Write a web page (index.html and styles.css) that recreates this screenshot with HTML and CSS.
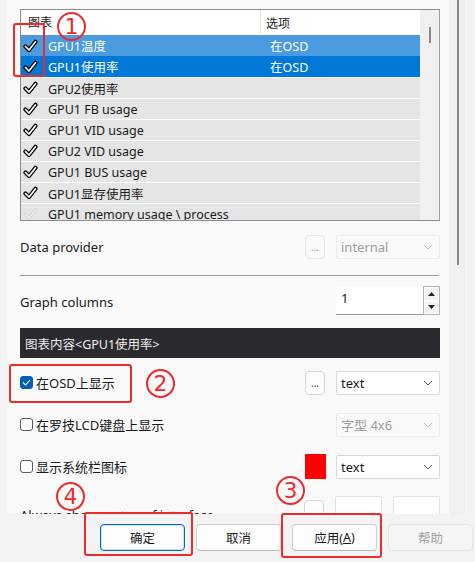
FILE: index.html
```html
<!DOCTYPE html>
<html lang="zh-CN">
<head>
  <meta charset="UTF-8">
  <title>监控图表设置</title>
  <link rel="stylesheet" href="styles.css">
</head>
<body>
  <div class="window">
    <div class="main">
      <div class="panel">
        <!-- graph list -->
        <div class="list">
          <div class="list-body">
            <div class="list-head">
              <span class="col-name">图表</span>
              <span class="col-opt">选项</span>
            </div>
            <div class="row hover"><span class="chk"><svg width="15" height="14" viewBox="0 0 15 14"><path d="M2.5 7.5 L6 11 L12.5 2.8" fill="none" stroke="#000" stroke-width="4.2" stroke-linecap="round" stroke-linejoin="round"/><path d="M2.5 7.5 L6 11 L12.5 2.8" fill="none" stroke="#fff" stroke-width="1.7" stroke-linecap="round" stroke-linejoin="round"/></svg></span><span class="col-name">GPU1温度</span><span class="col-opt">在OSD</span></div>
            <div class="row selected"><span class="chk"><svg width="15" height="14" viewBox="0 0 15 14"><path d="M2.5 7.5 L6 11 L12.5 2.8" fill="none" stroke="#000" stroke-width="4.2" stroke-linecap="round" stroke-linejoin="round"/><path d="M2.5 7.5 L6 11 L12.5 2.8" fill="none" stroke="#fff" stroke-width="1.7" stroke-linecap="round" stroke-linejoin="round"/></svg></span><span class="col-name">GPU1使用率</span><span class="col-opt">在OSD</span></div>
            <div class="row"><span class="chk"><svg width="15" height="14" viewBox="0 0 15 14"><path d="M2.5 7.5 L6 11 L12.5 2.8" fill="none" stroke="#000" stroke-width="4.2" stroke-linecap="round" stroke-linejoin="round"/><path d="M2.5 7.5 L6 11 L12.5 2.8" fill="none" stroke="#fff" stroke-width="1.7" stroke-linecap="round" stroke-linejoin="round"/></svg></span><span class="col-name">GPU2使用率</span></div>
            <div class="row"><span class="chk"><svg width="15" height="14" viewBox="0 0 15 14"><path d="M2.5 7.5 L6 11 L12.5 2.8" fill="none" stroke="#000" stroke-width="4.2" stroke-linecap="round" stroke-linejoin="round"/><path d="M2.5 7.5 L6 11 L12.5 2.8" fill="none" stroke="#fff" stroke-width="1.7" stroke-linecap="round" stroke-linejoin="round"/></svg></span><span class="col-name">GPU1 FB usage</span></div>
            <div class="row"><span class="chk"><svg width="15" height="14" viewBox="0 0 15 14"><path d="M2.5 7.5 L6 11 L12.5 2.8" fill="none" stroke="#000" stroke-width="4.2" stroke-linecap="round" stroke-linejoin="round"/><path d="M2.5 7.5 L6 11 L12.5 2.8" fill="none" stroke="#fff" stroke-width="1.7" stroke-linecap="round" stroke-linejoin="round"/></svg></span><span class="col-name">GPU1 VID usage</span></div>
            <div class="row"><span class="chk"><svg width="15" height="14" viewBox="0 0 15 14"><path d="M2.5 7.5 L6 11 L12.5 2.8" fill="none" stroke="#000" stroke-width="4.2" stroke-linecap="round" stroke-linejoin="round"/><path d="M2.5 7.5 L6 11 L12.5 2.8" fill="none" stroke="#fff" stroke-width="1.7" stroke-linecap="round" stroke-linejoin="round"/></svg></span><span class="col-name">GPU2 VID usage</span></div>
            <div class="row"><span class="chk"><svg width="15" height="14" viewBox="0 0 15 14"><path d="M2.5 7.5 L6 11 L12.5 2.8" fill="none" stroke="#000" stroke-width="4.2" stroke-linecap="round" stroke-linejoin="round"/><path d="M2.5 7.5 L6 11 L12.5 2.8" fill="none" stroke="#fff" stroke-width="1.7" stroke-linecap="round" stroke-linejoin="round"/></svg></span><span class="col-name">GPU1 BUS usage</span></div>
            <div class="row"><span class="chk"><svg width="15" height="14" viewBox="0 0 15 14"><path d="M2.5 7.5 L6 11 L12.5 2.8" fill="none" stroke="#000" stroke-width="4.2" stroke-linecap="round" stroke-linejoin="round"/><path d="M2.5 7.5 L6 11 L12.5 2.8" fill="none" stroke="#fff" stroke-width="1.7" stroke-linecap="round" stroke-linejoin="round"/></svg></span><span class="col-name">GPU1显存使用率</span></div>
            <div class="row"><span class="chk"><svg width="15" height="14" viewBox="0 0 15 14"><path d="M2.5 7.5 L6 11 L12.5 2.8" fill="none" stroke="#d4d4d4" stroke-width="3" stroke-linecap="round" stroke-linejoin="round"/><path d="M2.5 7.5 L6 11 L12.5 2.8" fill="none" stroke="#f2f2f2" stroke-width="1.2" stroke-linecap="round" stroke-linejoin="round"/></svg></span><span class="col-name">GPU1 memory usage \ process</span></div>
          </div>
          <div class="list-scroll"><div class="list-thumb"></div></div>
        </div>

        <div class="field first">
          <span class="label">Data provider</span>
          <span class="dots disabled">...</span>
          <span class="select disabled">internal<svg class="chev" width="10" height="6" viewBox="0 0 10 6"><path d="M1 1 L5 5 L9 1" fill="none" stroke="currentColor" stroke-width="1"/></svg></span>
        </div>

        <div class="rule"></div>

        <div class="field cols">
          <span class="label">Graph columns</span>
          <span class="spin">
            <span class="spin-value">1</span>
            <span class="spin-btns">
              <span class="spin-btn"><svg width="7" height="4" viewBox="0 0 7 4"><path d="M0 4 L3.5 0 L7 4 Z" fill="#222"/></svg></span>
              <span class="spin-btn"><svg width="7" height="4" viewBox="0 0 7 4"><path d="M0 0 L3.5 4 L7 0 Z" fill="#222"/></svg></span>
            </span>
          </span>
        </div>

        <div class="band">图表内容&lt;GPU1使用率&gt;</div>

        <div class="field opt">
          <span class="label"><span class="box checked"><svg width="9" height="7" viewBox="0 0 9 7"><path d="M1 3.5 L3.5 6 L8 1" fill="none" stroke="#fff" stroke-width="1.1"/></svg></span>在OSD上显示</span>
          <span class="dots">...</span>
          <span class="select">text<svg class="chev" width="10" height="6" viewBox="0 0 10 6"><path d="M1 1 L5 5 L9 1" fill="none" stroke="currentColor" stroke-width="1"/></svg></span>
        </div>

        <div class="field opt">
          <span class="label"><span class="box"></span>在罗技LCD键盘上显示</span>
          <span class="select disabled">字型 4x6<svg class="chev" width="10" height="6" viewBox="0 0 10 6"><path d="M1 1 L5 5 L9 1" fill="none" stroke="currentColor" stroke-width="1"/></svg></span>
        </div>

        <div class="field opt">
          <span class="label"><span class="box"></span>显示系统栏图标</span>
          <span class="swatch"></span>
          <span class="select">text<svg class="chev" width="10" height="6" viewBox="0 0 10 6"><path d="M1 1 L5 5 L9 1" fill="none" stroke="currentColor" stroke-width="1"/></svg></span>
        </div>

        <div class="field opt last">
          <span class="label">Always show on top of interface</span>
          <span class="dots"></span>
          <span class="mini"></span>
          <span class="mini"></span>
        </div>
      </div>
      <div class="vscroll"><div class="vthumb"></div></div>
    </div>

    <div class="buttons">
      <span class="btn default">确定</span>
      <span class="btn">取消</span>
      <span class="btn">应用(<u>A</u>)</span>
      <span class="btn disabled">帮助</span>
    </div>

    <!-- annotations -->
    <div class="mark box-1"></div>
    <div class="mark box-2"></div>
    <div class="mark box-3"></div>
    <div class="mark box-4"></div>
    <span class="num n1">1</span>
    <span class="num n2">2</span>
    <span class="num n3">3</span>
    <span class="num n4">4</span>
  </div>
</body>
</html>
```

FILE: styles.css
```css
* {
  box-sizing: border-box;
}
body {
  margin: 0;
  width: 475px;
  height: 562px;
  overflow: hidden;
  background-color: #f3f3f3;
  font-family: "Noto Sans", "Noto Sans CJK SC", sans-serif;
  font-size: 12px;
  color: #1a1a1a;
}
.window {
  position: relative;
  height: 562px;
  display: flex;
  flex-direction: column;
}
.main {
  display: flex;
  height: 514px;
  padding-left: 7px;
}
.panel {
  width: 442px;
  background-color: #f9f9f9;
  padding: 9px 9px 0 13px;
  overflow: hidden;
}
.vscroll {
  width: 18px;
  background-color: #f0f0f0;
  border-right: 1px solid #fafafa;
  display: flex;
  justify-content: center;
}
.vthumb {
  width: 2px;
  height: 265px;
  background-color: #8a8a8a;
}

/* list */
.list {
  display: flex;
  height: 212px;
  border: 1px solid #8c8c8c;
  border-right-color: #a0a0a0;
  background-color: #fff;
  overflow: hidden;
}
.list-body {
  flex: 1;
}
.list-scroll {
  width: 19px;
  background-color: #f0f0f0;
  display: flex;
  justify-content: center;
  padding-top: 17px;
}
.list-thumb {
  width: 2px;
  height: 16px;
  background-color: #8a8a8a;
}
.list-head {
  display: flex;
  height: 25px;
  align-items: center;
  background-color: #fff;
  font-size: 12px;
}
.list-head .col-name {
  width: 240px;
  padding-left: 7px;
  border-right: 1px solid #e5e5e5;
  height: 25px;
  line-height: 25px;
}
.list-head .col-opt {
  padding-left: 5px;
}
.row {
  display: flex;
  align-items: center;
  height: 21px;
  border-top: 1px solid #fff;
  background-color: #e5e5e5;
  font-size: 12.5px;
}
.row.hover {
  background-color: #4a9be0;
  color: #fff;
  border-top: none;
}
.row.selected {
  background-color: #0078d7;
  color: #fff;
  border-top: none;
}
.chk {
  width: 27px;
  padding-left: 2px;
  display: flex;
}
.row .col-name {
  width: 222px;
}
.row .col-opt {
  padding-left: 0;
}

/* form fields */
.field {
  display: flex;
  align-items: center;
  font-size: 13px;
}
.field .label {
  flex: 1;
  display: flex;
  align-items: center;
}
.field.first {
  height: 24px;
  margin-top: 14px;
}
.rule {
  height: 1px;
  background-color: #9c9c9c;
  margin: 16px 1px 0 0;
}
.field.cols {
  height: 29px;
  margin-top: 10px;
}
.field.cols .label {
  padding-top: 3px;
}
.field.opt {
  height: 25px;
}
.dots {
  width: 20px;
  height: 24px;
  border: 1px solid #d6d6d6;
  border-radius: 4px;
  background-color: #fdfdfd;
  font-size: 10px;
  display: flex;
  align-items: center;
  justify-content: center;
  margin-right: 11px;
  color: #333;
}
.dots.disabled {
  border-color: #e8e8e8;
  background-color: #f9f9f9;
  color: #999;
}
.select {
  width: 104px;
  height: 24px;
  border: 1px solid #d9d9d9;
  border-radius: 2px;
  background-color: #fff;
  display: flex;
  align-items: center;
  justify-content: space-between;
  padding: 0 6px 0 4px;
  font-size: 13px;
  color: #1a1a1a;
}
.select .chev {
  color: #555;
}
.select.disabled {
  background-color: #f9f9f9;
  border-color: #ebebeb;
  color: #9c9c9c;
}
.select.disabled .chev {
  color: #c4c4c4;
}
.spin {
  display: flex;
  height: 29px;
  width: 104px;
}
.spin-value {
  flex: 1;
  background-color: #fff;
  border-bottom: 1px solid #9a9a9a;
  padding: 3px 0 0 5px;
  font-size: 13px;
}
.spin-btns {
  width: 17px;
  display: flex;
  flex-direction: column;
  border: 1px solid #b4b4b4;
  background-color: #f0f0f0;
}
.spin-btn {
  flex: 1;
  display: flex;
  align-items: center;
  justify-content: center;
  border: 1px solid #fff;
  background-color: #f2f2f2;
}
.band {
  height: 30px;
  margin-top: 13px;
  background-color: #2b2b2f;
  color: #f0f0f0;
  font-size: 12.5px;
  padding-left: 5px;
  display: flex;
  align-items: center;
  margin-bottom: 12px;
}
.field.opt + .field.opt {
  margin-top: 17px;
}
.box {
  width: 13px;
  height: 13px;
  border: 1px solid #5c5c5c;
  border-radius: 3px;
  background-color: #fdfdfd;
  margin-right: 3px;
  display: flex;
  align-items: center;
  justify-content: center;
}
.box.checked {
  background-color: #005fb8;
  border-color: #005fb8;
}
.swatch {
  width: 21px;
  height: 25px;
  background-color: #ff0000;
  margin-right: 10px;
}
.field.last {
  margin-top: 17px;
  align-items: flex-start;
  height: 30px;
}
.field.last .label {
  padding-top: 10px;
}
.field.last .dots {
  margin-top: 4px;
}
.mini {
  width: 47px;
  height: 30px;
  border: 1px solid #e2e2e2;
  border-radius: 2px;
  background-color: #fff;
  margin-right: 11px;
}
.mini:last-child {
  margin-right: 0;
}

/* bottom buttons */
.buttons {
  flex: 1;
  display: flex;
  gap: 11px;
  padding: 10px 0 0 100px;
}
.btn {
  width: 85px;
  height: 27px;
  border: 1px solid #d0d0d0;
  border-bottom-color: #b8b8b8;
  border-radius: 4px;
  background-color: #fdfdfd;
  display: flex;
  align-items: center;
  justify-content: center;
  font-size: 12.5px;
  color: #1a1a1a;
}
.btn.default {
  border: 1px solid #0067c0;
  box-shadow: inset 0 0 0 1px #cfe0f3;
}
.btn.disabled {
  background-color: #f5f5f5;
  border-color: #e5e5e5;
  color: #a0a0a0;
}

/* red annotations */
.mark {
  position: absolute;
  border: 2px solid #ee2b2b;
  border-radius: 3px;
}
.box-1 {
  left: 13px;
  top: 23px;
  width: 32px;
  height: 54px;
}
.box-2 {
  left: 9px;
  top: 364px;
  width: 123px;
  height: 39px;
}
.box-3 {
  left: 281px;
  top: 513px;
  width: 101px;
  height: 45px;
}
.box-4 {
  left: 84px;
  top: 512px;
  width: 109px;
  height: 44px;
}
.num {
  position: absolute;
  width: 29px;
  height: 29px;
  border: 2px solid #ee2b2b;
  border-radius: 50%;
  color: #ee2b2b;
  font-family: "DejaVu Sans", sans-serif;
  font-size: 22px;
  line-height: 25px;
  text-align: center;
}
.n1 {
  left: 57px;
  top: 12px;
}
.n2 {
  left: 146px;
  top: 369px;
}
.n3 {
  left: 276px;
  top: 476px;
}
.n4 {
  left: 56px;
  top: 482px;
}
```
